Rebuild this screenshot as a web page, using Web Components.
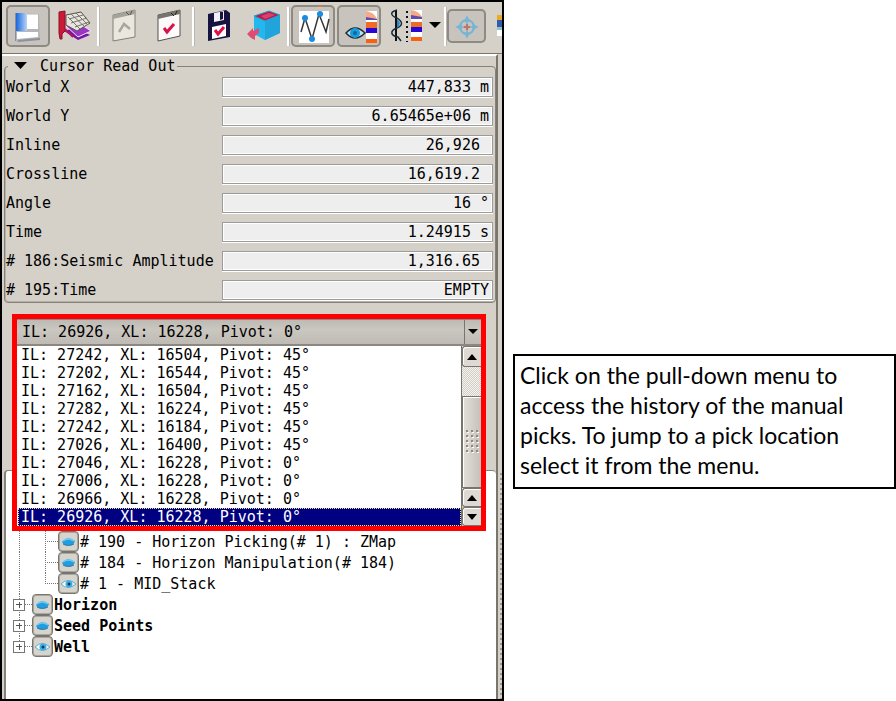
<!DOCTYPE html>
<html lang="en">
<head>
<meta charset="utf-8">
<title>Cursor Read Out</title>
<style>
html,body{margin:0;background:#fff}
body{font:15px/18px "DejaVu Sans Mono","Liberation Mono",monospace;color:#000}
</style>
</head>
<body>
<pick-page></pick-page>

<template id="t-page">
<style>
:host{display:grid;grid-template-columns:9fr 7fr;min-height:100vh}
.panel{display:flex;flex-direction:column;border:2px solid #000;background:#d5d1c8;min-width:0}
.body{display:flex;flex:1}
.content{flex:1;display:flex;flex-direction:column;min-width:0;padding:1px 0 0 2px;border-top:2px solid #fff;border-right:2px solid #77756d;box-sizing:border-box}
.grip{width:4px;margin-top:418px;background:radial-gradient(circle at 3px 2px,#9d998f 1px,transparent 1px) 0 0/4px 5px}
.zone{flex:1;position:relative;display:flex;flex-direction:column;padding-top:167px}
pick-history{position:absolute;top:11px;left:8px;right:10px}
tool-note{align-self:start;margin:354px 0 0 9px}
</style>
<section class="panel">
<tool-bar></tool-bar>
<div class="body">
<div class="content">
<read-out heading="Cursor Read Out">
<read-row label="World X" value="447,833 m"></read-row>
<read-row label="World Y" value="6.65465e+06 m"></read-row>
<read-row label="Inline" value="26,926&nbsp;"></read-row>
<read-row label="Crossline" value="16,619.2&nbsp;"></read-row>
<read-row label="Angle" value="16 °"></read-row>
<read-row label="Time" value="1.24915 s"></read-row>
<read-row label="# 186:Seismic Amplitude" value="1,316.65&nbsp;"></read-row>
<read-row label="# 195:Time" value="EMPTY"></read-row>
</read-out>
<div class="zone">
<object-tree>
<tree-item level="2" icon="closed"># 190 - Horizon Picking(# 1) : ZMap</tree-item>
<tree-item level="2" icon="closed"># 184 - Horizon Manipulation(# 184)</tree-item>
<tree-item level="2" icon="open" last># 1 - MID_Stack</tree-item>
<tree-item level="1" icon="closed">Horizon</tree-item>
<tree-item level="1" icon="closed">Seed Points</tree-item>
<tree-item level="1" icon="open" last>Well</tree-item>
</object-tree>
<pick-history></pick-history>
</div>
</div>
<div class="grip"></div>
</div>
</section>
<tool-note>Click on the pull-down menu to access the history of the manual picks. To jump to a pick location select it from the menu.</tool-note>
</template>

<template id="t-bar">
<style>
:host{display:flex;align-items:center;padding:3px 0 6px 3px;border-bottom:1px solid #77756d;overflow:hidden}
button{all:unset;flex:none;width:44px;height:42px;margin:0 1px;border-radius:5px;overflow:hidden}
button.on{background:#c8c4bd;box-shadow:inset 0 0 0 2px #8d8a83}
button.small{width:39px;height:34px;margin:0 11px 0 0}
button.drop{width:14px;margin:0 2px 0 0}
button.cut{width:14px;margin:0}
svg{display:block;width:100%;height:100%}
i{flex:none;width:1px;height:39px;margin:0;border-left:2px solid #fff;background:#bbb7ae}
</style>
<button class="on" aria-label="View layout"><svg viewBox="1 3 44 42">
<defs><linearGradient id="b"><stop stop-color="#1767dc"/><stop offset="1" stop-color="#b9d4f5"/></linearGradient></defs>
<path d="M10 11 34 12 35 37 11 40Z" fill="#b4b6bb"/><path d="M11 11H22V29H11Z" fill="url(#b)"/><path d="M22 12.500H33V27H22Z" fill="#fff"/><path d="M12 30H33V35L12 37Z" fill="#fff"/><path d="M13 39 35 37" stroke="#8e9199" stroke-width="2"/><path d="M10.500 11V39" stroke="#888da0"/></svg></button>
<button aria-label="Horizon tools"><svg viewBox="1 3 44 42">
<path d="M13 29 24 26 39 33 27 38Z" fill="#7416a5"/><path d="M15 24 26 20 40 29 27 35Z" fill="#9b35c5" stroke="#f0e3f4"/>
<path d="M15 13 30 10 39 21 26 29 15 23Z" fill="#e7e5de" stroke="#55524d"/><path d="M18 17 32 13M20 21 36 16M24 25 38 20M20 12 34 25M25 11 37 23M17 15 29 27" stroke="#77746d"/>
<path d="M8 10 14 9V29L11 32V37H9L8 31Z" fill="#cc1935" stroke="#8b102b"/><path d="M14 27 22 35" stroke="#b5174f" stroke-width="2"/></svg></button>
<i></i>
<button aria-label="Collapse window"><svg viewBox="1 3 44 42">
<path d="M13 13 35 8V35L13 39Z" fill="#eae7de" stroke="#827f78"/><path d="M13 13 35 8V12L13 17Z" fill="#a5a299"/><path d="M26 10 29 13M32 9 30 13" stroke="#54524d"/><path d="M19 30 24 22 30 27" fill="none" stroke="#aaa79f" stroke-width="2.500"/></svg></button>
<button aria-label="Check window"><svg viewBox="1 3 44 42">
<path d="M12 13 34 8V34L12 39Z" fill="#fffafa" stroke="#55524f"/><path d="M12 13 34 8V12L12 17Z" fill="#77746d"/><path d="M25 11 28 14M31 9 29 13" stroke="#222"/><path d="M18 26 21 30 28 22" fill="none" stroke="#da124a" stroke-width="3"/></svg></button>
<i></i>
<button aria-label="Save"><svg viewBox="1 3 44 42">
<path d="M13 12 31 8 35 11V35L13 39Z" fill="#17153f"/><path d="M19 11 29 9V18L19 20Z" fill="#f3f1f5"/><path d="M25 10 28 10V17L25 18Z" fill="#17153f"/><path d="M17 25 31 22V34L17 37Z" fill="#fff"/><path d="M20 28 23 32 29 25" fill="none" stroke="#e01148" stroke-width="3"/></svg></button>
<button aria-label="Load volume"><svg viewBox="1 3 44 42">
<path d="M13 14 28 9 39 13V31L24 38 13 32Z" fill="#21b9ed"/><path d="M13 14 28 9 39 13 24 19Z" fill="#bc1951" stroke="#28a1c3"/><path d="M20 14 28 11 34 13 24 17Z" fill="#d9406c"/><path d="M24 19 39 13V31L24 38Z" fill="#21a4db"/><path d="M6 32 12 26V29L18 26V31L14 34V38L10 36Z" fill="#df4c73"/></svg></button>
<i></i>
<button class="on" aria-label="Picking mode"><svg viewBox="1 3 44 42">
<path d="M9 9H39V41H9Z" fill="#fff"/><path d="M11 30 15 16 22 37 29 12 36 30 39 17" fill="none" stroke="#353437" stroke-width="1.500"/><g fill="#198de1"><circle cx="15" cy="16" r="3"/><circle cx="22" cy="37" r="3"/><circle cx="30" cy="12" r="3"/></g><path d="M28 4.500H32" stroke="#ef7f22"/></svg></button>
<button class="on" aria-label="Show seismic"><svg viewBox="1 3 44 42">
<path d="M30 9H41V41H30Z" fill="#fff"/><path d="M30 9Q38 10 41 17H30Z" fill="#f6aa88"/><path d="M30 15 41 17V18H30Z" fill="#624bad"/><path d="M30 20H41V26H30Z" fill="#ef6b27"/><path d="M30 26H41V31H30Z" fill="#2607d4"/><path d="M30 37H41V41H30Z" fill="#f9610f"/>
<path d="M10 31Q19 21 29 31Q19 41 10 31Z" fill="#b9deed" stroke="#252b34" stroke-width="1.500"/><circle cx="19" cy="31" r="5" fill="#189ddb"/><circle cx="19" cy="31" r="2" fill="#12669f"/></svg></button>
<button aria-label="Show wiggle"><svg viewBox="1 3 44 42">
<path d="M14 8V39" stroke="#111" stroke-width="2"/><path d="M15 8C7 10 9 14 15 16 21 20 21 23 15 26 7 29 9 34 16 35L19 39" fill="none" stroke="#172b3a" stroke-width="1.500"/><path d="M15 17Q21 21 15 26Z" fill="#3185bd"/><path d="M25 9V40" stroke="#111" stroke-width="2" stroke-dasharray="2 3"/>
<path d="M29 8H40V39H29Z" fill="#fff"/><path d="M29 8Q37 9 40 15H29Z" fill="#f6aa88"/><path d="M29 13 40 15V17H29Z" fill="#624bad"/><path d="M29 20H40V25H29Z" fill="#ef6b27"/><path d="M29 25H40V30H29Z" fill="#2607d4"/><path d="M29 35H40V39H29Z" fill="#f9610f"/></svg></button>
<button class="drop" aria-label="Display options"><svg viewBox="0 3 14 42"><path d="M1 20H13L7 26Z"/></svg></button>
<i></i>
<button class="on small" aria-label="Crosshair"><svg viewBox="0 0 39 34">
<g fill="none" stroke="#76b5d5" stroke-width="1.500"><circle cx="20" cy="18" r="7" stroke-width="2"/><path d="M20 8V28M10 18H30"/><path d="M20 8 18 12H22ZM20 28 18 24H22ZM10 18 14 16V20ZM30 18 26 16V20Z" fill="#76b5d5"/></g><path d="M17 18H23M20 15V21" stroke="#bc7568" stroke-width="2"/></svg></button>
<button class="cut" aria-label="Colour map"><svg viewBox="0 3 14 42"><path d="M0 13H14V18H0Z" fill="#e9ab21"/><path d="M0 18H14V25H0Z" fill="#315cae"/><path d="M0 25H14V28H0Z" fill="#8cc4ca"/><path d="M0 28H14V34H0Z" fill="#fff"/></svg></button>
</template>

<template id="t-out">
<style>
:host{display:block}
fieldset{margin:0;padding:2px 2px 2px 0;border:1px solid #85827b;box-shadow:inset 1px -1px 0 #b5b1a9;border-radius:4px;min-width:0}
legend{margin-left:3px;padding:0}
button{all:unset;display:flex;align-items:center;gap:13px;padding:0 2px 0 6px;line-height:18px}
svg{width:13px;height:8px}
.rows{display:grid;gap:9px}
</style>
<fieldset><legend><button aria-expanded="true"><svg viewBox="0 0 13 8"><path d="M0 0H13L6.500 7Z"/></svg><span></span></button></legend>
<div class="rows"><slot></slot></div></fieldset>
</template>

<template id="t-row">
<style>
:host{display:grid;grid-template-columns:217px 1fr;align-items:center}
label{padding-left:1px;white-space:nowrap}
input{box-sizing:border-box;width:100%;min-width:0;height:20px;margin:0;padding:0 3px;border:1px solid #9b9b9b;border-radius:0;background:#eee;box-shadow:inset 0 0 0 1px #fff,0 1px 0 #fff;font:inherit;color:inherit;text-align:right;outline:0}
</style>
<label for="v"></label><input id="v" readonly>
</template>

<template id="t-tree">
<style>
:host{display:block;flex:1;padding:60px 0 0 0;border:1px solid #85827b;border-width:1px 0 0 2px;border-radius:4px 4px 0 0;background:#fff}
</style><slot></slot>
</template>

<template id="t-item">
<style>
:host{display:flex;align-items:center;height:21px;--dot:repeating-linear-gradient(#777 0 1px,transparent 1px 2px);--hdot:repeating-linear-gradient(90deg,#777 0 1px,transparent 1px 2px)}
.a{width:26px;height:21px;display:flex;align-items:center;box-sizing:border-box;padding-left:7px;background:var(--dot) 13px 0/1px 100% no-repeat,var(--hdot) 13px 10px/13px 1px no-repeat}
.b{display:none;width:26px;height:21px;background:var(--dot) 13px 0/1px 100% no-repeat,var(--hdot) 13px 10px/13px 1px no-repeat}
:host([level="2"]) .b{display:block}
:host([level="2"]) .a{background:var(--dot) 13px 0/1px 100% no-repeat}
:host([level="2"]) .x{display:none}
:host([level="2"][last]) .b,:host([level="1"][last]) .a{background-size:1px 11px,13px 1px}
.x{all:unset;box-sizing:border-box;width:12px;height:12px;border:1px solid #777;background:linear-gradient(#555,#555) center/6px 1px no-repeat,linear-gradient(#555,#555) center/1px 6px no-repeat,#fff}
.e{all:unset;box-sizing:border-box;flex:none;width:21px;height:21px;border:1px solid #77756f;border-radius:4px;background:#d7d4cd;box-shadow:inset 0 0 0 1px #aaa79f}
svg{display:block;width:19px;height:19px}
.t{padding-left:1px;white-space:nowrap}
:host([level="1"]) .t{font-weight:bold}
</style>
<span class="a"><button class="x" aria-label="Expand"></button></span><span class="b"></span><button class="e" aria-label="Toggle visibility"></button><span class="t"><slot></slot></span>
</template>

<template id="t-hist">
<style>
:host{display:block;border:5px solid #f00;background:#fff}
.box{display:grid;grid-template-columns:1fr 17px;height:27px;background:linear-gradient(#bdb9b3,#cac6c0 40%,#bfbbb4);border-top:1px solid #8b8881;border-bottom:2px solid #8b8881;box-sizing:border-box}
select{appearance:none;margin:0;border:0;border-radius:0;outline:0;font:inherit;color:inherit;background:none}
.box select{grid-area:1/1/2/3;padding:0 0 0 5px}
.arrow{grid-area:1/2;border-left:1px solid #77756d;display:grid;place-items:center;pointer-events:none}
.arrow svg{width:12px;height:6px}
.menu{display:grid;grid-template-columns:1fr 20px;height:180px}
.menu select{height:180px;overflow:hidden;padding:1px 0 0 1px;background:#fff;box-sizing:border-box}
option{height:18px;min-height:18px;line-height:18px;padding:0 0 0 3px;box-sizing:border-box;color:#000}
.menu option:checked{color:#fff;background:#000080 linear-gradient(#000080,#000080);outline:1px dotted #e8e87a;outline-offset:-1px}
.sb{display:grid;grid-template-rows:21px 29px 92px 19px 19px;border-left:1px solid #77756d;background:repeating-conic-gradient(#d2cec6 0 25%,#f4f3f0 0 50%) 0 0/2px 2px}
.sb button,.thumb{all:unset;box-sizing:border-box;background:#dedad3;border:1px solid #77756d;border-right:0;border-radius:3px 0 0 3px;box-shadow:inset 1px 1px 0 #fff;display:grid;place-items:center}
.sb .thumb{background:linear-gradient(90deg,#e3e0da,#c5c1b9);border-radius:0}
.sb svg{width:12px;height:6px}
.sb .thumb svg{width:15px;height:26px}
</style>
<div class="box"><select aria-label="Pick history"></select><span class="arrow"><svg viewBox="0 0 12 6"><path d="M1 0H11L6 5Z"/></svg></span></div>
<div class="menu"><select class="list" size="10" aria-label="Manual picks"></select>
<div class="sb"><button aria-label="Scroll up"><svg viewBox="0 0 12 6"><path d="M1 6H11L6 0Z"/></svg></button><span></span>
<div class="thumb"><svg viewBox="0 0 15 26"><g stroke="#8c8981" stroke-width="2" stroke-dasharray="2 3"><path d="M1 2H15M1 7H15M1 12H15M1 17H15M1 22H15"/></g><g stroke="#fff" stroke-dasharray="2 3"><path d="M2 3.500H15M2 8.500H15M2 13.500H15M2 18.500H15M2 23.500H15"/></g></svg></div>
<button aria-label="Previous"><svg viewBox="0 0 12 6"><path d="M1 6H11L6 0Z"/></svg></button>
<button aria-label="Next"><svg viewBox="0 0 12 6"><path d="M1 0H11L6 6Z"/></svg></button></div></div>
</template>

<template id="t-note">
<style>
:host{display:block;box-sizing:border-box;border:2px solid #000;background:#fff;padding:4px 24px 7px 5px;font:23px/30px Lato,"Open Sans",sans-serif;font-variant-ligatures:none}
</style><slot></slot>
</template>

<script>
const define = (name, tpl, setup) => customElements.define(name, class extends HTMLElement {
  connectedCallback() {
    if (this.shadowRoot) return;
    const root = this.attachShadow({ mode: 'open' });
    root.append(document.getElementById(tpl).content.cloneNode(true));
    if (setup) setup(this, root);
  }
});
const EYES = {
  closed: '<svg viewBox="0 0 19 19"><path d="M3 10Q9 3 16 9L14 13Q9 15 5 13Z" fill="#209ee2"/><path d="M4 9Q9 5 15 9" stroke="#71c8ef" stroke-width="1.500" fill="none"/><path d="M4 12Q9 15 15 12" stroke="#477b9b" fill="none"/></svg>',
  open: '<svg viewBox="0 0 19 19"><path d="M2 10Q9 3 17 10Q9 17 2 10Z" fill="#eefaff" stroke="#62aaca"/><circle cx="10" cy="10" r="3.500" fill="#41aee0"/><circle cx="10" cy="10" r="1.500" fill="#123a66"/></svg>'
};
const PICKS = [
  [27242, 16504, 45], [27202, 16544, 45], [27162, 16504, 45], [27282, 16224, 45], [27242, 16184, 45],
  [27026, 16400, 45], [27046, 16228, 0], [27006, 16228, 0], [26966, 16228, 0], [26926, 16228, 0]
];
define('tool-bar', 't-bar');
define('tool-note', 't-note');
define('object-tree', 't-tree');
define('tree-item', 't-item', (el, root) => {
  root.querySelector('.e').innerHTML = EYES[el.getAttribute('icon')];
});
define('read-row', 't-row', (el, root) => {
  root.querySelector('label').textContent = el.getAttribute('label');
  root.querySelector('input').value = el.getAttribute('value');
});
define('read-out', 't-out', (el, root) => {
  root.querySelector('span').textContent = el.getAttribute('heading');
});
define('pick-history', 't-hist', (el, root) => {
  const lists = [...root.querySelectorAll('select')];
  for (const list of lists) {
    for (const [il, xl, pivot] of PICKS) list.add(new Option(`IL: ${il}, XL: ${xl}, Pivot: ${pivot}°`));
    list.selectedIndex = PICKS.length - 1;
    list.addEventListener('change', () => lists.forEach(l => { l.selectedIndex = list.selectedIndex; }));
  }
});
define('pick-page', 't-page');
</script>
</body>
</html>
